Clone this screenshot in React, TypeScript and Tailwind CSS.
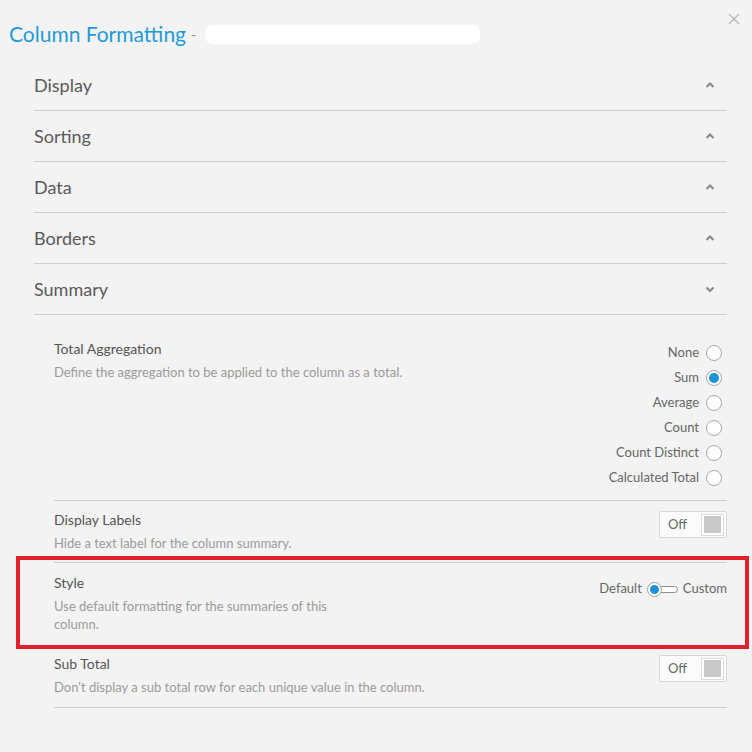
import React from 'react';

const font = { fontFamily: 'Lato, "Open Sans", sans-serif' };

const Chevron = ({ up }: { up: boolean }) => (
  <svg width="10" height="8" viewBox="0 0 10 8" className="text-[#8a8a8a]">
    {up ? (
      <path d="M1.5 6 L5 2.5 L8.5 6" fill="none" stroke="currentColor" strokeWidth="2.2" />
    ) : (
      <path d="M1.5 2.5 L5 6 L8.5 2.5" fill="none" stroke="currentColor" strokeWidth="2.2" />
    )}
  </svg>
);

const Section = ({ title, open }: { title: string; open?: boolean }) => (
  <div className="flex h-[51px] items-center justify-between border-b border-[#cfcfcf] pr-[12px]">
    <span className="text-[18px] text-[#5a5a5a]">{title}</span>
    <Chevron up={!open} />
  </div>
);

const Radio = ({ label, checked }: { label: string; checked?: boolean }) => (
  <div className="flex h-[25px] items-center justify-end gap-[7px]">
    <span className="text-[13px] text-[#666]">{label}</span>
    <span className="flex h-[16px] w-[16px] items-center justify-center rounded-full border border-[#a8a8a8] bg-white">
      {checked && <span className="h-[10px] w-[10px] rounded-full bg-[#1a94d9]" />}
    </span>
  </div>
);

const OffToggle = () => (
  <div className="flex h-[27px] w-[68px] items-center justify-between rounded-[2px] border border-[#d8d8d8] bg-[#fbfbfb] pl-[8px] pr-[2px]">
    <span className="text-[13px] text-[#666]">Off</span>
    <span className="flex h-[22px] w-[23px] items-center justify-center border border-[#dcdcdc] bg-white">
      <span className="h-[17px] w-[17px] bg-[#c9c9c9]" />
    </span>
  </div>
);

const Head = ({ title, desc }: { title: string; desc: React.ReactNode }) => (
  <div className="flex flex-col">
    <span className="text-[14px] leading-[18px] text-[#555]">{title}</span>
    <span className="mt-[5px] text-[13px] leading-[18px] text-[#9b9b9b]">{desc}</span>
  </div>
);

export default function App() {
  return (
    <div className="min-h-[752px] w-[752px] bg-[#f3f3f3]" style={font}>
      <div className="relative flex h-[60px] items-center pl-[9px] pt-[8px]">
        <span className="text-[21px] text-[#1f9ad7]">Column Formatting</span>
        <span className="ml-[5px] text-[14px] text-[#888]">-</span>
        <div className="ml-[9px] h-[19px] w-[275px] rounded-[8px] bg-white" />
        <svg className="absolute right-[12px] top-[13px]" width="12" height="12" viewBox="0 0 12 12">
          <path d="M1 1 L11 11 M11 1 L1 11" stroke="#b5b5b5" strokeWidth="1.1" />
        </svg>
      </div>

      <div className="ml-[34px] mr-[25px]">
        <Section title="Display" />
        <Section title="Sorting" />
        <Section title="Data" />
        <Section title="Borders" />
        <Section title="Summary" open />
      </div>

      <div className="ml-[54px] mr-[25px]">
        <div className="flex justify-between border-b border-[#cfcfcf] pb-[10px] pt-[25px]">
          <Head title="Total Aggregation" desc="Define the aggregation to be applied to the column as a total." />
          <div className="mr-[5px] flex flex-col">
            <Radio label="None" />
            <Radio label="Sum" checked />
            <Radio label="Average" />
            <Radio label="Count" />
            <Radio label="Count Distinct" />
            <Radio label="Calculated Total" />
          </div>
        </div>

        <div className="flex justify-between border-b border-[#cfcfcf] pb-[10px] pt-[10px]">
          <Head title="Display Labels" desc="Hide a text label for the column summary." />
          <OffToggle />
        </div>

        <div className="relative flex justify-between border-b border-[#cfcfcf] pb-[12px] pt-[11px]">
          <Head
            title="Style"
            desc={<span className="block w-[300px]">Use default formatting for the summaries of this column.</span>}
          />
          <div className="flex h-[30px] items-center gap-[5px] text-[13px] text-[#666]">
            <span>Default</span>
            <span className="flex items-center">
              <span className="z-10 flex h-[15px] w-[15px] items-center justify-center rounded-full border border-[#9c9c9c] bg-white">
                <span className="h-[9px] w-[9px] rounded-full bg-[#1a94d9]" />
              </span>
              <span className="-ml-[2px] h-[7px] w-[18px] rounded-r-full border border-[#8f8f8f] bg-white" />
            </span>
            <span>Custom</span>
          </div>
          <div className="pointer-events-none absolute -bottom-[4px] -left-[38px] -right-[22px] -top-[7px] border-[4px] border-[#e0202a]" />
        </div>

        <div className="flex justify-between border-b border-[#cfcfcf] pb-[11px] pt-[9px]">
          <Head title="Sub Total" desc="Don't display a sub total row for each unique value in the column." />
          <OffToggle />
        </div>
      </div>
    </div>
  );
}
